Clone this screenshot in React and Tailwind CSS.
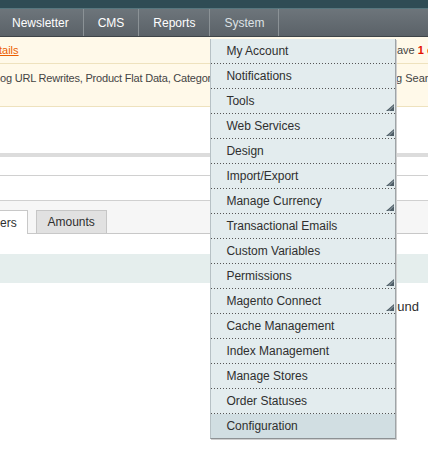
import React from "react";

const items = [
  { label: "My Account" },
  { label: "Notifications" },
  { label: "Tools", arrow: true },
  { label: "Web Services", arrow: true },
  { label: "Design" },
  { label: "Import/Export", arrow: true },
  { label: "Manage Currency", arrow: true },
  { label: "Transactional Emails" },
  { label: "Custom Variables" },
  { label: "Permissions", arrow: true },
  { label: "Magento Connect", arrow: true },
  { label: "Cache Management" },
  { label: "Index Management" },
  { label: "Manage Stores" },
  { label: "Order Statuses" },
  { label: "Configuration", active: true, last: true },
];

function Grip() {
  return (
    <svg width="8" height="7" viewBox="0 0 8 7" className="absolute right-[1px] bottom-[2px]">
      <polygon points="8,0 8,7 0,7" fill="#4f5e67" />
      <line x1="2.6" y1="7" x2="8" y2="1.6" stroke="#aebbc1" strokeWidth="0.8" />
    </svg>
  );
}

function Menu() {
  return (
    <div className="absolute top-[30px] left-0 w-[186px] bg-[#e3ecee] border-l border-r border-b border-l-[#b7c1c5] border-r-[#9ea4a7] border-b-[#8d9194] shadow-[1px_1px_0_#cfcfcf] z-10">
      {items.map((it) => (
        <div key={it.label} className="flex flex-col">
          <div
            className={
              "relative h-[24px] flex items-center pl-[15px] text-[12px] text-[#2f2f2f] whitespace-nowrap " +
              (it.active ? "bg-[#d1dee2]" : "")
            }
          >
            {it.label}
            {it.arrow ? <Grip /> : null}
          </div>
          {it.last ? null : (
            <div className="h-px bg-[linear-gradient(to_right,#555_1px,transparent_1px)] bg-[length:3px_1px]" />
          )}
        </div>
      ))}
    </div>
  );
}

export default function App() {
  return (
    <div className="relative w-[428px] h-[452px] overflow-hidden bg-white font-['Liberation_Sans',Arial,sans-serif]">
      <div className="h-[8px] bg-[#2f4c55]" />
      <div className="h-px bg-[#57777f]" />
      <div className="h-[28px] flex items-stretch bg-gradient-to-b from-[#6d757b] to-[#5b6268] border-b border-[#3e4448]">
        <div className="-ml-[2px] px-[14px] pt-px flex items-center border-r border-[#8b9296] text-[12px] text-white whitespace-nowrap">
          Newsletter
        </div>
        <div className="px-[14px] pt-px flex items-center border-r border-[#8b9296] text-[12px] text-white">CMS</div>
        <div className="px-[14px] pt-px flex items-center border-r border-[#8b9296] text-[12px] text-white">Reports</div>
        <div className="relative px-[14px] pt-px flex items-center border-r border-[#8b9296] text-[12px] text-[#dde2e5]">
          System
          <Menu />
        </div>
      </div>

      <div className="h-[27px] flex items-center bg-[#fff9e9] border-b border-[#eee2be] text-[11px] text-[#444] whitespace-nowrap">
        <div className="w-[397px] shrink-0 overflow-hidden">
          <span className="-ml-[1px] underline text-[#eb5e00]">tails</span>
        </div>
        <span>
          ave <b className="text-[#e41101]">1</b> <span className="text-[#e41101]">critical</span>
        </span>
      </div>
      <div className="h-[43px] pt-[8px] flex bg-[#fff9e9] border-b border-[#eee2be] text-[11px] leading-[13px] text-[#444] whitespace-nowrap">
        <div className="w-[396px] shrink-0 overflow-hidden tracking-[-0.2px]">og URL Rewrites, Product Flat Data, Category Products</div>
        <span>g Search Index</span>
      </div>

      <div className="h-[46px]" />
      <div className="h-[4px] bg-[#dcdcdc]" />
      <div className="h-[19px] border-b border-[#d0d0d0]" />
      <div className="h-[25px] border-b border-[#d0d0d0]" />

      <div className="h-[33px] flex items-end gap-[8px] bg-[#f6f6f6] border-b border-[#c8c8c8] text-[12px] text-[#2f2f2f]">
        <div className="-ml-[31px] -mb-px h-[24px] px-[10px] flex items-center bg-white border border-b-0 border-[#c8c8c8]">
          Orders
        </div>
        <div className="h-[23px] w-[71px] flex items-center justify-center bg-[#e1e1e1] border border-b-0 border-[#c6c6c6]">
          Amounts
        </div>
      </div>

      <div className="h-[20px]" />
      <div className="h-[29px] bg-[#e5eeed]" />
      <div className="mt-[16px] pr-[9px] text-right text-[13px] leading-[16px] text-[#2f2f2f] whitespace-nowrap">
        No records found
      </div>
    </div>
  );
}
